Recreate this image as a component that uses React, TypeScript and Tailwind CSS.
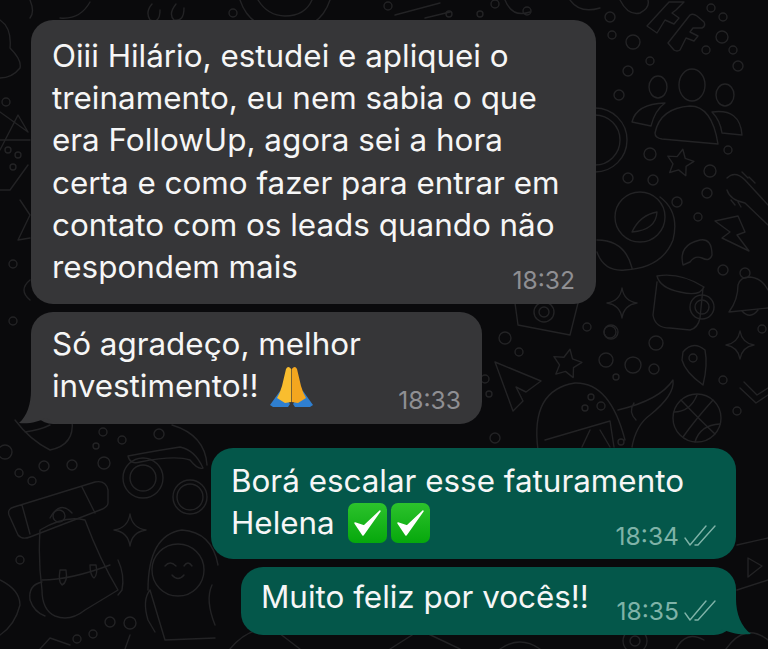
const dots: [number, number, number][] = [
  [610, 17, 5], [612, 35, 4], [633, 42, 7], [711, 8, 4], [723, 17, 4], [722, 37, 6], [706, 50, 4], [733, 50, 4],
  [738, 66, 5], [650, 61, 4], [628, 71, 5], [619, 95, 5], [728, 150, 4], [650, 154, 6], [710, 171, 6], [628, 178, 5],
  [653, 180, 5], [707, 193, 5], [677, 202, 5], [698, 217, 4], [723, 270, 5], [610, 332, 6], [656, 343, 7], [713, 333, 4],
  [762, 329, 4], [606, 360, 7], [633, 365, 8], [654, 369, 5], [616, 377, 3], [723, 380, 4], [737, 411, 4], [505, 338, 6],
  [519, 352, 4], [587, 327, 4], [611, 332, 7], [591, 397, 3], [601, 406, 4], [585, 408, 3], [485, 379, 4], [489, 394, 3],
  [495, 438, 5], [621, 442, 3], [5, 452, 7], [44, 466, 5], [72, 465, 5], [104, 463, 6], [96, 446, 3], [122, 440, 4],
  [103, 432, 4], [159, 434, 5], [19, 473, 4], [32, 481, 4], [20, 560, 4], [110, 622, 5], [130, 623, 6], [93, 634, 4],
  [77, 639, 4], [388, 6, 4], [233, 13, 4], [495, 4, 4], [527, 11, 4], [6, 102, 4], [13, 264, 4], [13, 321, 4], [8, 150, 3],
  [18, 155, 3], [13, 167, 3], [449, 14, 3], [480, 14, 3], [143, 478, 20], [143, 478, 13], [190, 497, 17], [190, 497, 13],
  [178, 570, 26], [544, 312, 10], [544, 312, 5], [595, 140, 32], [595, 140, 25], [702, 307, 12], [702, 307, 7], [745, 273, 5],
  [640, 217, 25], [693, 358, 4], [697, 418, 24], [635, 641, 12], [635, 641, 5], [59, 516, 6],
];

const lines = [
  // people
  "M655 133Q660 108 690 106Q712 106 718 144L662 139Q655 138 655 133Z",
  "M632 122Q636 104 665 103Q655 110 651 126Z",
  "M712 112Q740 108 742 135L722 133Q720 120 712 112Z",
  // letters at the top
  "M647 26L669 2L684 2L676 10L672 13L679 18L674 24L665 20L657 33Z",
  "M668 43L690 15Q693 13 697 16L704 22Q706 26 702 28L693 28L690 32L698 36L694 41L686 38L680 50Q677 52 674 50Z",
  "M620 0Q628 16 640 13Q650 8 648 0",
  // bird
  "M660 197Q680 212 673 240Q662 268 625 270Q604 272 597 252M597 240Q625 240 632 268",
  "M632 232Q640 215 657 212Q656 230 632 232Z",
  // lightning, mushroom
  "M715 221L738 216L745 232L737 235L749 251L722 238L730 232Z",
  "M683 265Q678 245 700 240Q712 238 712 255Q710 262 702 258Q695 255 690 262Z",
  // brush
  "M727 178Q735 170 745 180L768 205M727 190Q730 200 745 203L768 225M742 172L748 178M749 177L755 183M731 200L735 205M738 202L741 207",
  // mug
  "M657 276Q680 272 704 287Q700 297 680 292Q660 288 657 276ZM657 282L653 315Q655 328 670 328L690 330Q698 328 700 318L703 288",
  // bell
  "M729 312Q738 300 738 285Q740 277 750 277Q762 278 768 290M729 312L768 308M742 311Q750 320 758 310",
  // pin
  "M683 352Q693 340 705 350Q708 365 703 385Q685 372 682 360Z",
  // basketball
  "M681 400Q700 420 715 434M713 400Q695 420 683 437M674 412Q690 412 697 395M720 424Q700 425 695 442",
  // check shape, camera
  "M740 388L756 403L768 395M744 382L757 395L768 388",
  "M515 303L518 325L570 335L578 303",
  // plane
  "M495 362L541 381L526 392L516 387L523 401L513 411Z",
  // whale and tail
  "M538 450Q530 390 575 383Q610 382 625 440M545 440L610 421L614 447M590 430L582 447M600 430L610 447",
  "M618 410Q660 400 673 380Q675 395 650 415Q636 425 632 447M636 420Q628 412 634 403",
  // right edge
  "M737 545L768 538M737 590L768 580M748 558L762 566L748 577Z",
  "M676 649Q686 630 704 640M726 649Q745 622 768 640",
  // glasses arm, backpack
  "M128 456Q160 450 180 447Q195 450 203 468Q198 470 190 460Q175 455 140 462Q130 465 128 456Z",
  "M14 507L95 482Q106 480 108 490L108 503Q108 507 100 510L30 537Q22 540 18 535L9 515Q7 509 14 507ZM22 505L30 534M82 487L95 513",
  "M50 518Q60 500 72 513M40 530Q65 515 85 520Q100 560 118 590L85 610Q70 622 55 616Q42 610 42 590Q38 560 40 530Z",
  "M42 580Q70 580 110 565M118 560Q125 575 122 590L118 595M42 582Q28 585 30 600Q34 612 45 616",
  "M60 570Q58 582 62 585Q68 582 66 570ZM90 565Q90 575 94 578Q98 575 96 565Z",
  // astronaut
  "M148 590Q148 535 182 530Q212 532 218 565M150 590L165 640L215 638M150 590Q142 600 148 620L155 632",
  "M165 566Q170 560 176 566M184 566Q188 560 192 566M172 575Q178 582 184 575M212 585Q205 600 215 625",
  // under bubble two
  "M15 420Q30 440 50 450Q75 445 72 420M25 432Q40 430 50 425M172 425Q205 435 207 465",
  // left edge
  "M0 20Q12 28 10 48Q22 60 20 68Q12 78 0 78M0 112L28 132L18 115L0 150M0 190L10 190L28 165M20 200L30 215L18 240L30 238",
  "M30 280Q18 290 30 300M0 140L30 140",
  "M0 580Q20 590 20 605Q15 625 0 635M40 649L50 638L70 645M125 649L130 635",
  // top strip
  "M30 0Q35 12 30 18M90 2Q80 20 60 18M152 4Q145 12 150 20Q160 24 160 10M176 4Q168 14 174 20Q184 22 184 8",
  "M240 0Q250 30 285 30Q320 30 330 0M258 0Q268 16 285 16Q305 16 312 0M395 15L440 3M425 18L450 12M505 0Q512 18 530 12",
  "M570 0Q580 14 600 8",
  // low middle
  "M230 649Q250 625 275 630L300 649M390 649L420 630L460 649M500 649Q520 635 540 649",
];

const sparkle = (x: number, y: number, r: number) =>
  `M${x} ${y - r}Q${x + 2} ${y - 2} ${x + r} ${y}Q${x + 2} ${y + 2} ${x} ${y + r}Q${x - 2} ${y + 2} ${x - r} ${y}Q${x - 2} ${y - 2} ${x} ${y - r}Z`;

const star = (x: number, y: number, r: number) => {
  const pts = [];
  for (let i = 0; i < 10; i++) {
    const a = (Math.PI / 5) * i - Math.PI / 2 + 0.2;
    const d = i % 2 ? r * 0.5 : r;
    pts.push(`${(x + d * Math.cos(a)).toFixed(1)},${(y + d * Math.sin(a)).toFixed(1)}`);
  }
  return pts.join(" ");
};

function Doodles() {
  return (
    <svg className="absolute inset-0" width="768" height="649" viewBox="0 0 768 649" fill="none" stroke="#232325" strokeWidth="1.4" strokeLinecap="round" strokeLinejoin="round">
      {dots.map(([x, y, r], i) => (
        <circle key={i} cx={x} cy={y} r={r} />
      ))}
      {lines.map((d, i) => (
        <path key={i} d={d} />
      ))}
      <ellipse cx="692" cy="85" rx="13" ry="16" />
      <ellipse cx="658" cy="87" rx="9" ry="11" />
      <ellipse cx="725" cy="95" rx="9" ry="11" />
      <path d={sparkle(622, 303, 15)} />
      <path d={sparkle(740, 345, 14)} />
      <path d={sparkle(130, 530, 16)} />
      <polygon points={star(680, 163, 14)} />
      <polygon points={star(567, 364, 15)} />
    </svg>
  );
}

function Tail({ side }: { side: "left" | "right" }) {
  if (side === "left") {
    return (
      <svg className="absolute left-[-12px] bottom-0" width="40" height="34" viewBox="0 0 40 34">
        <path d="M12 0C12 14 8 26 0 33C10 34 20 32 26 28L40 34L40 0Z" fill="#363638" />
      </svg>
    );
  }
  return (
    <svg className="absolute right-[-15px] bottom-0" width="40" height="36" viewBox="0 0 40 36">
      <path d="M25 0C25 14 30 28 40 35C28 36 18 34 12 30L0 36L0 0Z" fill="#04574a" />
    </svg>
  );
}

function Ticks() {
  return (
    <svg width="33" height="22" viewBox="0 0 33 22" fill="none" stroke="#7fb3a8" strokeWidth="1.4" strokeLinecap="round" strokeLinejoin="round">
      <path d="M1 13L6 20L22 1" />
      <path d="M11 20L14 20L31 1" />
    </svg>
  );
}

function Pray() {
  return (
    <svg className="inline-block ml-[3px] mt-[-12px] mb-[-8px]" width="43" height="41" viewBox="0 0 43 41">
      <path d="M0 39L10 25L20 38L18 41L3 41Z" fill="#2f7fd0" />
      <path d="M43 39L33 25L23 38L25 41L40 41Z" fill="#2f7fd0" />
      <path d="M21.2 36L21.2 3Q18 -1 16 3L12 20Q10 27 7 32L15 37Z" fill="#f9bd2f" />
      <path d="M21.8 36L21.8 3Q25 -1 27 3L31 20Q33 27 36 32L28 37Z" fill="#f3a61f" />
    </svg>
  );
}

function CheckBox() {
  return (
    <svg className="inline-block ml-[4px] mt-[-14px] mb-[-9px]" width="39" height="40" viewBox="0 0 39 40">
      <defs>
        <linearGradient id="chk" x1="0" y1="0" x2="0" y2="1">
          <stop offset="0" stopColor="#2cc22c" />
          <stop offset="1" stopColor="#06a80c" />
        </linearGradient>
      </defs>
      <rect width="39" height="40" rx="7" fill="url(#chk)" />
      <path d="M7 20L15 32L32 8L16 23Z" fill="#fff" stroke="#fff" strokeWidth="1.5" strokeLinejoin="round" />
    </svg>
  );
}

export default function App() {
  return (
    <div className="relative w-[768px] h-[649px] overflow-hidden bg-[#0a0a0c] font-['Inter',sans-serif] text-[#f6f6f6] text-[31.4px] leading-[42.2px]">
      <Doodles />
      <div className="relative flex flex-col gap-6 pt-5 pl-[31px] pr-[32px]">
        <div className="flex flex-col items-start gap-2">
          <div className="w-[565px] rounded-[22px] bg-[#363638] px-[21px] pt-[15px] pb-[16px]">
            Oiii Hilário, estudei e apliquei o<br />
            treinamento, eu nem sabia o que<br />
            era FollowUp, agora sei a hora<br />
            certa e como fazer para entrar em<br />
            contato com os leads quando não
            <div className="flex items-end justify-between">
              <span>respondem mais</span>
              <span className="-mb-[5px] text-[24.6px] leading-[26px] text-[#8f8f93]">18:32</span>
            </div>
          </div>

          <div className="relative w-[451px] rounded-[22px] bg-[#363638] px-[21px] pt-[11px] pb-[16.6px]">
            <Tail side="left" />
            <div className="relative">Só agradeço, melhor</div>
            <div className="relative flex items-end justify-between">
              <span>
                investimento!! <Pray />
              </span>
              <span className="-mb-[5px] text-[24.6px] leading-[26px] text-[#8f8f93]">18:33</span>
            </div>
          </div>
        </div>

        <div className="flex flex-col items-end gap-2">
          <div className="w-[525px] rounded-[22px] bg-[#04574a] pl-5 pr-[19px] pt-[12px] pb-[14.6px]">
            Borá escalar esse faturamento
            <div className="flex items-end justify-between">
              <span>
                Helena <CheckBox /><CheckBox />
              </span>
              <span className="-mb-[4px] flex items-center gap-[5px] text-[24.6px] leading-[26px] text-[#7fb3a8]">
                18:34 <Ticks />
              </span>
            </div>
          </div>

          <div className="relative w-[495px] rounded-[22px] bg-[#04574a] pl-5 pr-[19px] pt-[9px] pb-[16.8px]">
            <Tail side="right" />
            <div className="relative flex items-end justify-between">
              <span>Muito feliz por vocês!!</span>
              <span className="-mb-[6px] flex items-center gap-[5px] text-[24.6px] leading-[26px] text-[#7fb3a8]">
                18:35 <Ticks />
              </span>
            </div>
          </div>
        </div>
      </div>
    </div>
  );
}
